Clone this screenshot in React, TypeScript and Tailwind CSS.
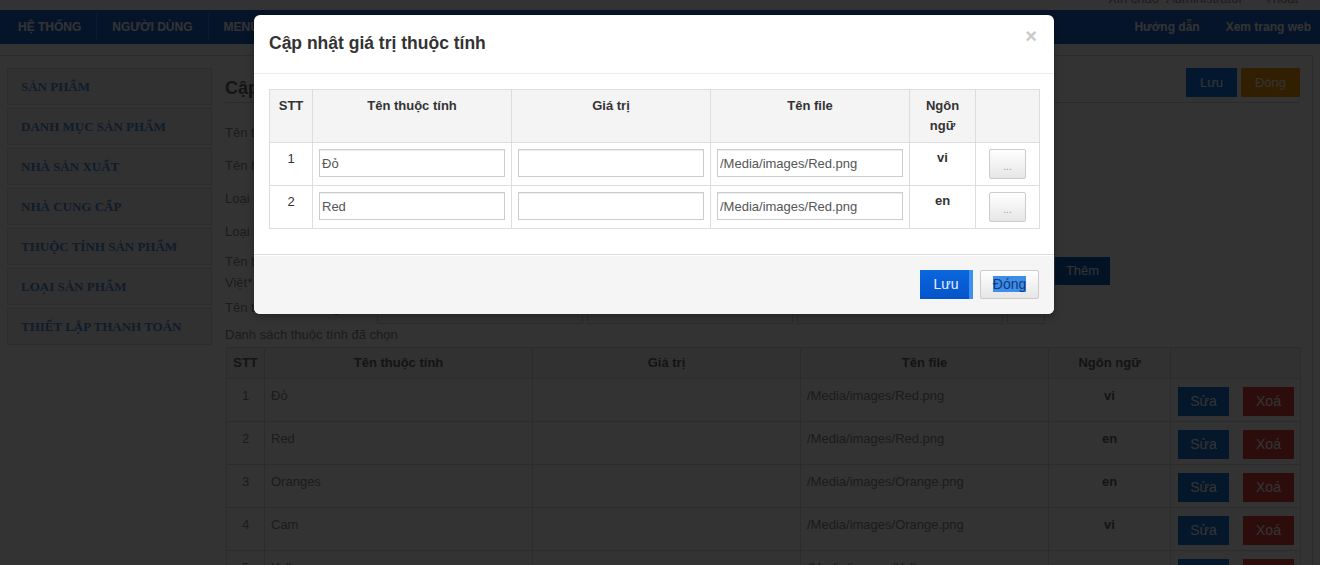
import { useState } from 'react'

const sideItems = [
  'SẢN PHẨM',
  'DANH MỤC SẢN PHẨM',
  'NHÀ SẢN XUẤT',
  'NHÀ CUNG CẤP',
  'THUỘC TÍNH SẢN PHẨM',
  'LOẠI SẢN PHẨM',
  'THIẾT LẬP THANH TOÁN',
]

const formRows = ['Tên thuộc tính', 'Tên hiển thị', 'Loại thuộc tính', 'Loại hiển thị']

const selected = [
  { stt: 1, name: 'Đỏ', file: '/Media/images/Red.png', lang: 'vi' },
  { stt: 2, name: 'Red', file: '/Media/images/Red.png', lang: 'en' },
  { stt: 3, name: 'Oranges', file: '/Media/images/Orange.png', lang: 'en' },
  { stt: 4, name: 'Cam', file: '/Media/images/Orange.png', lang: 'vi' },
  { stt: 5, name: 'Yellow', file: '/Media/images/Yellow.png', lang: 'en' },
]

const editing = [
  { stt: 1, name: 'Đỏ', value: '', file: '/Media/images/Red.png', lang: 'vi' },
  { stt: 2, name: 'Red', value: '', file: '/Media/images/Red.png', lang: 'en' },
]

function PageInput({ w = 'w-[206px]', h = 'h-[28px]' }: { w?: string; h?: string }) {
  return <div className={`${w} ${h} border border-[#d6d6d6] bg-white`} />
}

export default function App() {
  const [rows] = useState(editing)

  return (
    <div className="relative h-[565px] w-[1320px] overflow-hidden bg-white font-['Liberation_Sans',Arial,sans-serif] text-[13px] text-[#8a8a8a]">
      {/* Top strip */}
      <div className="h-[10px] overflow-hidden">
        <div className="-mt-[11px] flex justify-end gap-[22px] pr-[22px] leading-[20px] text-[13px] text-[#8c8c8c]">
          <span>Xin chào&nbsp;&nbsp;Administrator</span>
          <span>Thoát</span>
        </div>
      </div>

      {/* Nav */}
      <nav className="flex h-[34px] items-center justify-between bg-[#1964c8] text-[12px] font-bold text-white">
        <div className="flex h-full items-center pl-[3px]">
          <span className="px-[15px]">HỆ THỐNG</span>
          <span className="h-[26px] w-px bg-[#4a86d6]" />
          <span className="px-[15px]">NGƯỜI DÙNG</span>
          <span className="h-[26px] w-px bg-[#4a86d6]" />
          <span className="px-[15px]">MENU</span>
        </div>
        <div className="flex items-center gap-[26px] pr-[9px]">
          <span>Hướng dẫn</span>
          <span>Xem trang web</span>
        </div>
      </nav>

      {/* Main */}
      <div className="mt-[11px] flex h-[520px] w-[1313px] gap-[13px] border-t border-r border-[#d8d8d8] pl-[7px] pt-[12px]">
        {/* Sidebar */}
        <aside className="flex w-[205px] flex-col gap-[3px]">
          {sideItems.map((item) => (
            <div
              key={item}
              className="flex h-[37px] items-center border border-[#dcdcdc] bg-[#f6f6f6] px-[13px] font-['Liberation_Serif',serif] text-[13px] font-bold text-[#4a90d0]"
            >
              {item}
            </div>
          ))}
        </aside>

        {/* Content */}
        <section className="-mt-[12px] w-[1075px]">
          <div className="flex h-[47px] items-start justify-between border-b border-[#d4d4d4]">
            <h2 className="mt-[21px] text-[18px] font-bold leading-[22px] text-[#666]">Cập nhật thuộc tính sản phẩm</h2>
            <div className="mt-[12px] flex gap-[4px]">
              <button className="h-[29px] w-[51px] bg-[#0f78e6] text-white">Lưu</button>
              <button className="h-[29px] w-[59px] bg-[#f89406] text-white">Đóng</button>
            </div>
          </div>

          <div className="mt-[16px] flex flex-col gap-[5px]">
            {formRows.map((label) => (
              <div key={label} className="flex h-[28px] items-center">
                <span className="w-[152px]">{label}</span>
                <PageInput w="w-[410px]" />
              </div>
            ))}
            <div className="flex items-start">
              <span className="w-[152px] pr-[20px] leading-[21px]">Tên thuộc tính tiếng Việt*</span>
              <div className="mt-[6px] flex gap-[4px]">
                <PageInput />
                <PageInput />
                <PageInput />
                <PageInput w="w-[38px]" />
                <button className="ml-[6px] h-[28px] w-[55px] bg-[#0a5fbf] text-white">Thêm</button>
              </div>
            </div>
            <div className="flex h-[26px] items-start">
              <span className="w-[152px] whitespace-nowrap leading-[20px]">Tên thuộc tính tiếng Anh</span>
              <div className="mt-[2px] flex gap-[4px]">
                <PageInput h="h-[24px]" />
                <PageInput h="h-[24px]" />
                <PageInput h="h-[24px]" />
                <PageInput w="w-[38px]" h="h-[24px]" />
              </div>
            </div>
          </div>

          <p className="mt-[3px] leading-[16px]">Danh sách thuộc tính đã chọn</p>

          <table className="mt-[4px] ml-[1px] w-[1074px] table-fixed border-collapse border border-[#ddd]">
            <colgroup>
              <col className="w-[38px]" />
              <col className="w-[268px]" />
              <col className="w-[268px]" />
              <col className="w-[248px]" />
              <col className="w-[122px]" />
              <col className="w-[130px]" />
            </colgroup>
            <thead>
              <tr className="h-[31px] bg-[#f5f5f5] font-bold text-[#666]">
                <th className="border border-[#ddd]">STT</th>
                <th className="border border-[#ddd]">Tên thuộc tính</th>
                <th className="border border-[#ddd]">Giá trị</th>
                <th className="border border-[#ddd]">Tên file</th>
                <th className="border border-[#ddd]">Ngôn ngữ</th>
                <th className="border border-[#ddd]"></th>
              </tr>
            </thead>
            <tbody>
              {selected.map((r) => (
                <tr key={r.stt} className="h-[43px]">
                  <td className="border border-[#ddd] pt-[8px] text-center align-top leading-[18px]">{r.stt}</td>
                  <td className="border border-[#ddd] px-[6px] pt-[8px] align-top leading-[18px]">{r.name}</td>
                  <td className="border border-[#ddd]"></td>
                  <td className="border border-[#ddd] px-[6px] pt-[8px] align-top leading-[18px]">{r.file}</td>
                  <td className="border border-[#ddd] pt-[8px] text-center align-top font-bold leading-[18px] text-[#666]">{r.lang}</td>
                  <td className="border border-[#ddd] pl-[7px] pt-[8px] align-top">
                    <div className="flex gap-[14px]">
                      <button className="h-[29px] w-[51px] bg-[#1474d8] text-[14px] text-white">Sửa</button>
                      <button className="h-[29px] w-[51px] bg-[#d9443f] text-[14px] text-white">Xoá</button>
                    </div>
                  </td>
                </tr>
              ))}
            </tbody>
          </table>
        </section>
      </div>

      {/* Backdrop */}
      <div className="absolute inset-0 bg-black/80" />

      {/* Modal */}
      <div className="absolute left-[254px] top-[15px] w-[800px] rounded-[6px] bg-white shadow-[0_3px_7px_rgba(0,0,0,0.3)]">
        <div className="flex h-[59px] items-start justify-between border-b border-[#ececec] px-[15px]">
          <h3 className="mt-[16px] text-[17.5px] font-bold leading-[24px] text-[#333]">Cập nhật giá trị thuộc tính</h3>
          <button className="mt-[11px] mr-[2px] text-[20px] font-bold leading-[20px] text-[#c9c9c9]">×</button>
        </div>

        <div className="px-[15px] pt-[15px] pb-[25px]">
          <table className="w-[770px] table-fixed border-collapse border border-[#ddd] text-[#333]">
            <colgroup>
              <col className="w-[43px]" />
              <col className="w-[199px]" />
              <col className="w-[199px]" />
              <col className="w-[199px]" />
              <col className="w-[66px]" />
              <col className="w-[64px]" />
            </colgroup>
            <thead>
              <tr className="h-[53px] bg-[#f4f4f4]">
                <th className="border border-[#ddd] pt-[6px] align-top leading-[20px]">STT</th>
                <th className="border border-[#ddd] pt-[6px] align-top leading-[20px]">Tên thuộc tính</th>
                <th className="border border-[#ddd] pt-[6px] align-top leading-[20px]">Giá trị</th>
                <th className="border border-[#ddd] pt-[6px] align-top leading-[20px]">Tên file</th>
                <th className="border border-[#ddd] px-[8px] pt-[6px] align-top leading-[20px]">Ngôn ngữ</th>
                <th className="border border-[#ddd]"></th>
              </tr>
            </thead>
            <tbody>
              {rows.map((r) => (
                <tr key={r.stt} className="h-[43px]">
                  <td className="border border-[#ddd] pt-[6px] text-center align-top leading-[20px]">{r.stt}</td>
                  <td className="border border-[#ddd] p-[6px] align-top">
                    <input
                      readOnly
                      defaultValue={r.name}
                      className="h-[28px] w-full border border-[#ccc] px-[2px] text-[13px] text-[#555] shadow-[inset_0_1px_1px_rgba(0,0,0,0.075)] outline-none"
                    />
                  </td>
                  <td className="border border-[#ddd] p-[6px] align-top">
                    <input
                      readOnly
                      defaultValue={r.value}
                      className="h-[28px] w-full border border-[#ccc] px-[2px] text-[13px] text-[#555] shadow-[inset_0_1px_1px_rgba(0,0,0,0.075)] outline-none"
                    />
                  </td>
                  <td className="border border-[#ddd] p-[6px] align-top">
                    <input
                      readOnly
                      defaultValue={r.file}
                      className="h-[28px] w-full border border-[#ccc] px-[2px] text-[13px] text-[#555] shadow-[inset_0_1px_1px_rgba(0,0,0,0.075)] outline-none"
                    />
                  </td>
                  <td className="border border-[#ddd] pt-[5px] text-center align-top font-bold leading-[20px]">{r.lang}</td>
                  <td className="border border-[#ddd] pt-[6px] align-top">
                    <button className="mx-auto flex h-[30px] w-[37px] items-end justify-center rounded-[2px] border border-[#ccc] bg-gradient-to-b from-white to-[#e6e6e6] pb-[6px] text-[10px] leading-[10px] text-[#999]">
                      ...
                    </button>
                  </td>
                </tr>
              ))}
            </tbody>
          </table>
        </div>

        <div className="flex h-[60px] items-center justify-end gap-[7px] rounded-b-[6px] border-t border-[#ddd] bg-[#f5f5f5] pr-[15px] shadow-[inset_0_1px_0_#fff]">
          <button className="h-[29px] w-[53px] border-r-[4px] border-[#3d8ff0] bg-gradient-to-b from-[#0b67de] to-[#0553c9] pl-[3px] text-[14px] text-[#e8f0ff]">
            Lưu
          </button>
          <button className="h-[29px] w-[59px] rounded-[2px] border border-[#ccc] bg-gradient-to-b from-white to-[#e6e6e6] text-[14px]">
            <span className="bg-[#3d8ee8] text-[#16387e]">Đóng</span>
          </button>
        </div>
      </div>
    </div>
  )
}
